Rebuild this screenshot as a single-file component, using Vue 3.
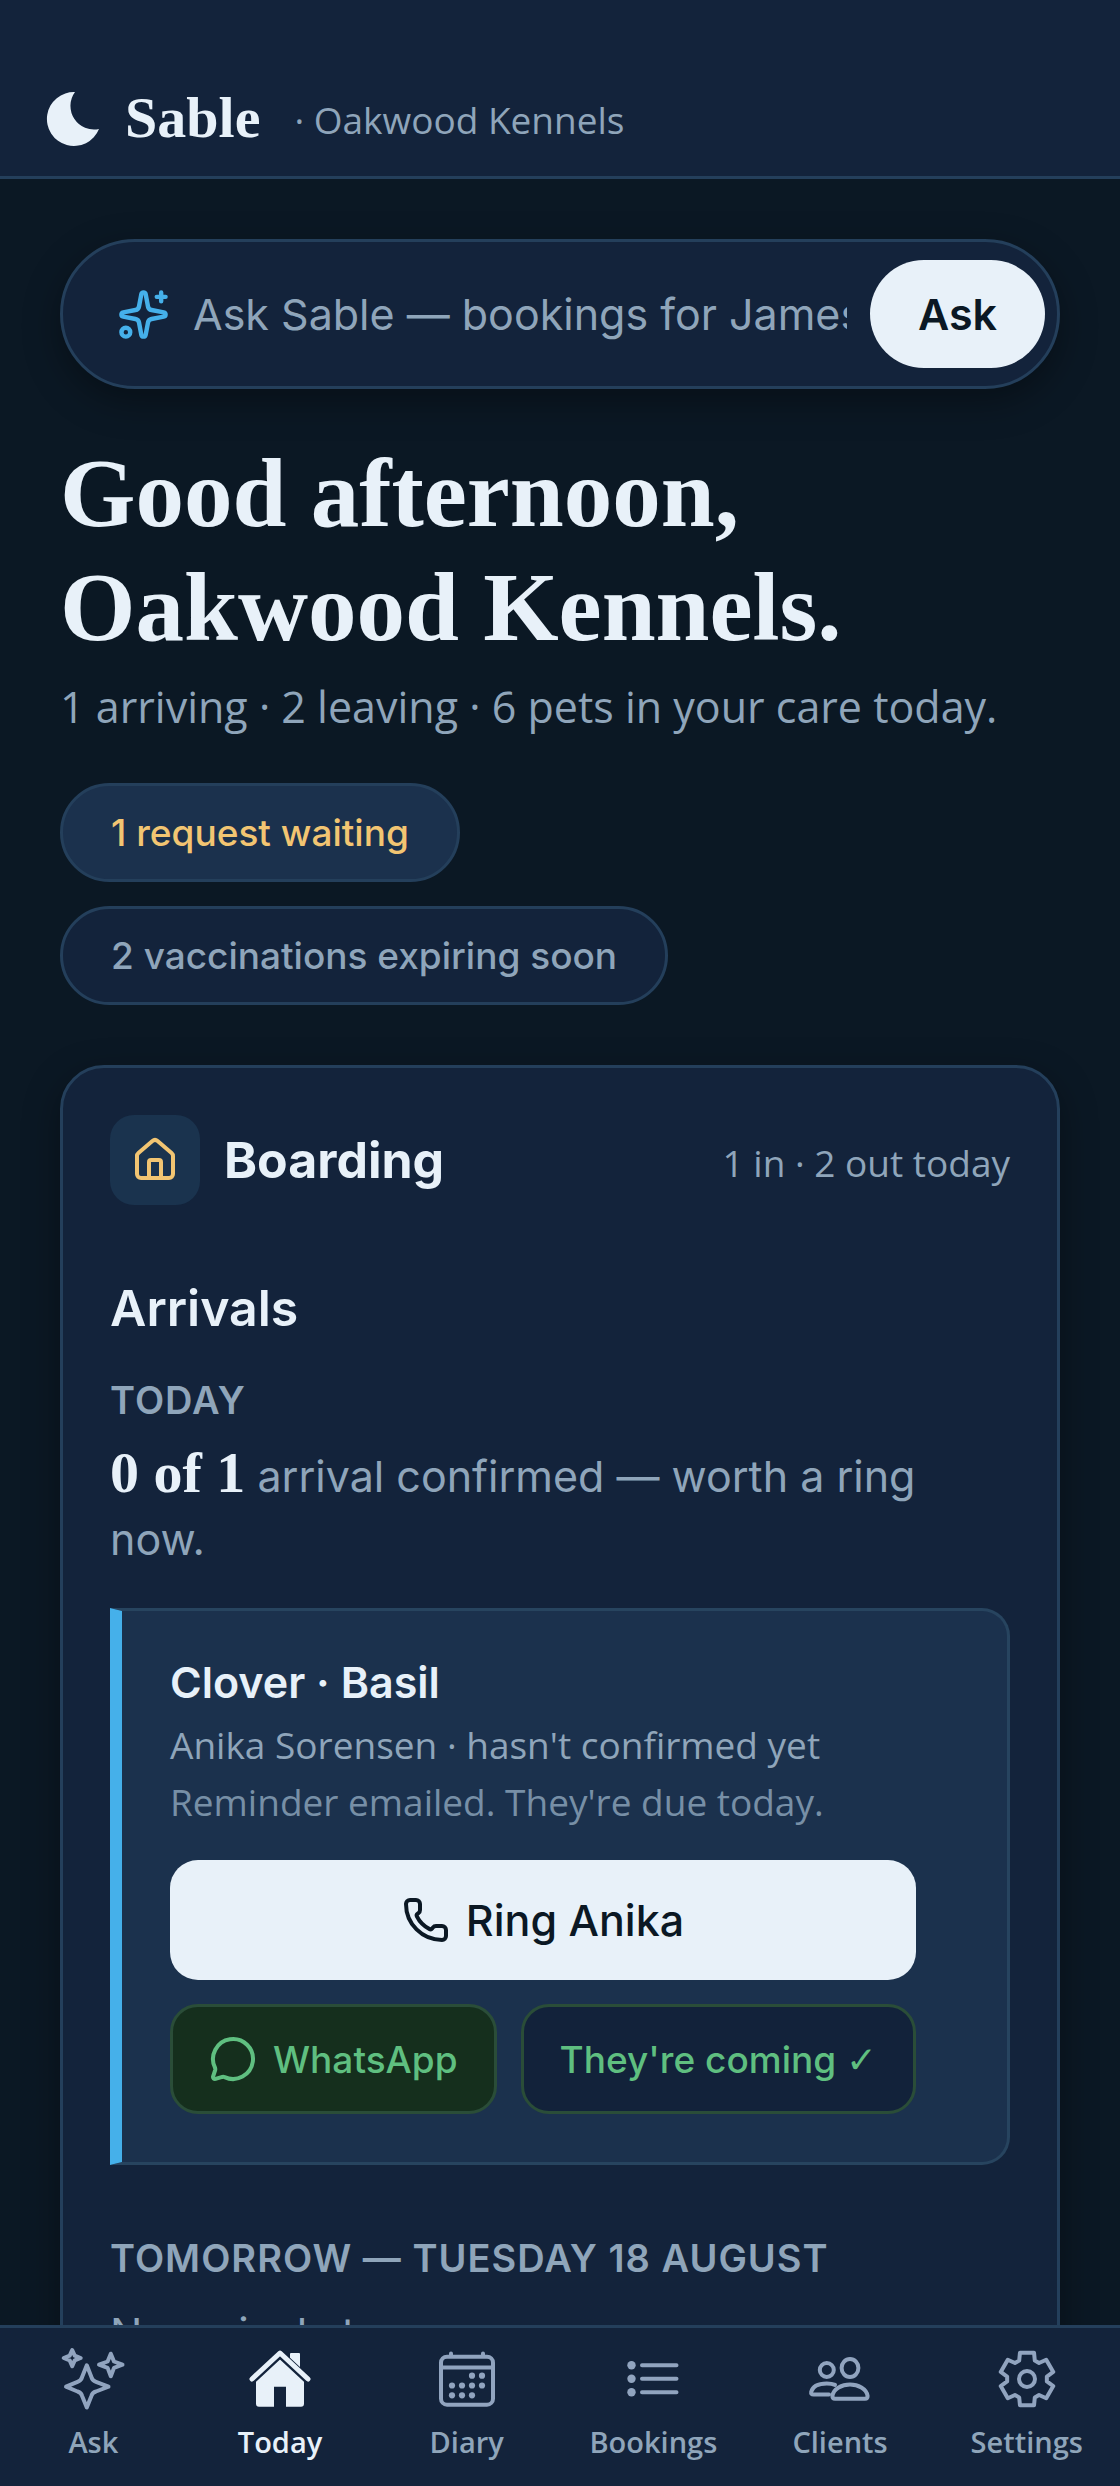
<script setup>
import { ref } from 'vue'

const query = ref('')

const tabs = [
  { id: 'ask', label: 'Ask' },
  { id: 'today', label: 'Today' },
  { id: 'diary', label: 'Diary' },
  { id: 'bookings', label: 'Bookings' },
  { id: 'clients', label: 'Clients' },
  { id: 'settings', label: 'Settings' }
]
const active = ref('today')

const diaryDots = [
  [38, 28.7], [48, 28.7],
  [18, 38.5], [28, 38.5], [38, 38.5], [48, 38.5],
  [18, 48.3], [28, 48.3], [38, 48.3]
]

// Six-toothed cog outline around (33, 32)
const toothCorners = [[-23, 20], [-15, 27.2], [15, 27.2], [23, 20]]
const gearPath = [0, 60, 120, 180, 240, 300]
  .flatMap((turn) =>
    toothCorners.map(([offset, radius]) => {
      const angle = ((turn + offset) * Math.PI) / 180
      return `${(33 + radius * Math.sin(angle)).toFixed(2)} ${(32 - radius * Math.cos(angle)).toFixed(2)}`
    })
  )
  .join('L')
</script>

<template>
  <div class="app">
    <header class="topbar">
      <svg class="moon" viewBox="0 0 54 57" aria-hidden="true">
        <path d="M29 2A27 27 0 1 0 53 39A23.6 23.6 0 0 1 29 2Z" />
      </svg>
      <span class="brand">Sable</span>
      <span class="site">· Oakwood Kennels</span>
    </header>

    <main class="content">
      <form class="search" @submit.prevent>
        <svg class="line-icon sparkle" viewBox="0 0 24 24" aria-hidden="true">
          <path d="M11.017 2.814a1 1 0 0 1 1.966 0l1.051 5.558a2 2 0 0 0 1.594 1.594l5.558 1.051a1 1 0 0 1 0 1.966l-5.558 1.051a2 2 0 0 0-1.594 1.594l-1.051 5.558a1 1 0 0 1-1.966 0l-1.051-5.558a2 2 0 0 0-1.594-1.594l-5.558-1.051a1 1 0 0 1 0-1.966l5.558-1.051a2 2 0 0 0 1.594-1.594z" />
          <path d="M20 2v4M22 4h-4" />
          <circle cx="4" cy="20" r="2" />
        </svg>
        <input v-model="query" type="text" aria-label="Ask Sable" placeholder="Ask Sable — bookings for James" />
        <button type="submit" class="ask">Ask</button>
      </form>

      <h1>Good afternoon, Oakwood Kennels.</h1>
      <p class="summary">1 arriving · 2 leaving · 6 pets in your care today.</p>

      <div class="chips">
        <button type="button" class="chip chip-alert">1 request waiting</button>
        <button type="button" class="chip">2 vaccinations expiring soon</button>
      </div>

      <section class="card">
        <div class="card-head">
          <span class="badge">
            <svg class="line-icon" viewBox="0 0 24 24" aria-hidden="true">
              <path d="M15 21v-8a1 1 0 0 0-1-1h-4a1 1 0 0 0-1 1v8" />
              <path d="M3 10a2 2 0 0 1 .709-1.528l7-6a2 2 0 0 1 2.582 0l7 6A2 2 0 0 1 21 10v9a2 2 0 0 1-2 2H5a2 2 0 0 1-2-2z" />
            </svg>
          </span>
          <h2>Boarding</h2>
          <span class="counts">1 in · 2 out today</span>
        </div>

        <h3>Arrivals</h3>
        <h4>TODAY</h4>
        <p class="status"><strong>0 of 1</strong> arrival confirmed — worth a ring now.</p>

        <article class="arrival">
          <h5>Clover · Basil</h5>
          <p class="detail">Anika Sorensen · hasn't confirmed yet</p>
          <p class="detail faint">Reminder emailed. They're due today.</p>
          <div class="actions">
            <button type="button" class="action ring">
              <svg class="line-icon" viewBox="0 0 24 24" aria-hidden="true">
                <path d="M13.832 16.568a1 1 0 0 0 1.213-.303l.355-.465A2 2 0 0 1 17 15h3a2 2 0 0 1 2 2v3a2 2 0 0 1-2 2A18 18 0 0 1 2 4a2 2 0 0 1 2-2h3a2 2 0 0 1 2 2v3a2 2 0 0 1-.8 1.6l-.468.351a1 1 0 0 0-.292 1.233 14 14 0 0 0 6.392 6.384" />
              </svg>
              Ring Anika
            </button>
            <button type="button" class="action whatsapp">
              <svg class="line-icon" viewBox="0 0 24 24" aria-hidden="true">
                <path d="M2.992 16.342a2 2 0 0 1 .094 1.167l-1.065 3.29a1 1 0 0 0 1.236 1.168l3.413-.998a2 2 0 0 1 1.099.092 10 10 0 1 0-4.777-4.719" />
              </svg>
              WhatsApp
            </button>
            <button type="button" class="action coming">
              <span>They're coming <span class="tick">✓</span></span>
            </button>
          </div>
        </article>

        <h4 class="next-day">TOMORROW — TUESDAY 18 AUGUST</h4>
        <p class="status">No arrivals tomorrow.</p>
      </section>
    </main>

    <nav class="tabs" aria-label="Main">
      <a
        v-for="tab in tabs"
        :key="tab.id"
        :href="'#' + tab.id"
        class="tab"
        :class="{ current: tab.id === active }"
        @click="active = tab.id"
      >
        <svg class="tab-icon" viewBox="0 0 66 66" aria-hidden="true">
          <g v-if="tab.id === 'ask'">
            <path d="M26.8 18.3L31.5 30.3Q32.5 33.5 36 34.8L48.5 39.7L36 44.5Q32.5 45.5 31.5 48.7L26.8 60.5L22 48.7Q21 45.5 17.5 44.5L6 39.7L17.5 34.8Q21 33.5 22 30.3Z" />
            <path d="M12.2 3L14.7 8.6L20.7 11L14.7 13.4L12.2 19.3L9.7 13.4L3.7 11L9.7 8.6Z" />
            <path d="M50.8 6.7L54 14.5L62.5 17.7L54 20.9L50.8 29.2L47.6 20.9L39 17.7L47.6 14.5Z" />
          </g>
          <g v-else-if="tab.id === 'today'">
            <path class="solid" d="M43 7Q43 6 44 6H52Q53 6 53 7V24L43 15Z" />
            <path class="solid" d="M33 11L57 33V56.5Q57 59.7 54 59.7H39V39.7H27V59.7H12Q9 59.7 9 56.5V33Z" />
            <path class="roof-gap" d="M5 33L33 7L61 33" />
            <path class="roof" d="M5 32L33 6L61 32" />
          </g>
          <g v-else-if="tab.id === 'diary'">
            <rect x="7" y="9.7" width="52" height="48" rx="6" />
            <path d="M7 20.5H59M17 6.5V9M49 6.5V9" />
            <circle v-for="([x, y], i) in diaryDots" :key="i" class="solid" :cx="x" :cy="y" r="3.1" />
          </g>
          <g v-else-if="tab.id === 'bookings'">
            <path d="M22 18.3H56.5M22 31.8H56.5M22 45.3H56.5" />
            <circle v-for="y in [18.3, 31.8, 45.3]" :key="y" class="solid" cx="11.5" :cy="y" r="4.2" />
          </g>
          <g v-else-if="tab.id === 'clients'">
            <circle cx="19.8" cy="23" r="7" />
            <ellipse cx="43" cy="21" rx="8.4" ry="8.9" />
            <path d="M25.4 49C26.5 41.7 35 37.6 43 37.6S59.5 41.7 60.6 49Q60.6 51.8 58 51.8H28Q25.4 51.8 25.4 49Z" />
            <path d="M22 47.5H6.5Q3.7 47.5 4.2 44.9C5.5 39 12 36.4 19.8 36.4Q25 36.4 28 37.9" />
          </g>
          <g v-else>
            <path :d="'M' + gearPath + 'Z'" />
            <circle cx="33" cy="32" r="8" />
          </g>
        </svg>
        <span>{{ tab.label }}</span>
      </a>
    </nav>
  </div>
</template>

<style>
body {
  margin: 0;
  background: #0b1824;
}
</style>

<style scoped>
.app {
  --surface: #13233b;
  --raised: #1b314d;
  --line: #243f5b;
  --text: #e8f1f9;
  --muted: #8fa5ba;
  --round: Inter, "Open Sans", sans-serif;
  --plain: "Open Sans", "Noto Sans", sans-serif;
  --serif: "Liberation Serif", serif;
  display: flex;
  flex-direction: column;
  height: 100vh;
  background: #0b1824;
  color: var(--text);
  font-family: var(--round);
}

h1, h2, h3, h4, h5, p {
  margin: 0;
}

button, input {
  box-sizing: border-box;
  font-family: inherit;
}

button {
  cursor: pointer;
}

.line-icon {
  flex: none;
  width: 48px;
  height: 48px;
  fill: none;
  stroke: currentColor;
  stroke-width: 2;
  stroke-linecap: round;
  stroke-linejoin: round;
}

.topbar {
  display: flex;
  flex: none;
  align-items: center;
  height: 116px;
  padding: 60px 46px 0;
  border-bottom: 3px solid var(--line);
  background: var(--surface);
}

.moon {
  width: 54px;
  height: 57px;
  fill: var(--text);
}

.brand {
  margin-left: 25px;
  font: 700 58px/72px var(--serif);
}

.site {
  margin-left: 34px;
  padding-top: 4px;
  color: var(--muted);
  font: 400 37px/52px var(--plain);
}

.content {
  flex: 1;
  min-height: 0;
  padding: 60px 60px 0;
  overflow-y: auto;
  scrollbar-width: none;
}

.search {
  display: flex;
  align-items: center;
  height: 144px;
  padding: 0 12px 0 54px;
  border: 3px solid var(--line);
  border-radius: 75px;
  background: var(--surface);
  box-shadow: 0 12px 36px rgba(0, 0, 0, 0.35);
}

.sparkle {
  width: 53px;
  height: 53px;
  color: #45b0ea;
}

.search input {
  flex: 1;
  min-width: 0;
  margin: 0 23px;
  padding: 0;
  border: 0;
  outline: 0;
  background: none;
  color: var(--text);
  font-size: 43px;
  line-height: 60px;
}

.search input::placeholder {
  color: var(--muted);
  opacity: 1;
}

.ask {
  height: 108px;
  padding: 0 48px;
  border: 0;
  border-radius: 54px;
  background: var(--text);
  color: #0b1824;
  font-size: 43px;
  font-weight: 600;
}

h1 {
  margin-top: 48px;
  font: 700 97px/114px var(--serif);
}

.summary {
  margin-top: 12px;
  color: var(--muted);
  font: 400 43px/60px var(--plain);
}

.chips {
  display: flex;
  flex-wrap: wrap;
  gap: 24px;
  margin-top: 46px;
}

.chip {
  height: 99px;
  padding: 0 48px;
  border: 3px solid var(--line);
  border-radius: 50px;
  background: var(--surface);
  color: var(--muted);
  font-size: 37px;
  font-weight: 500;
}

.chip-alert {
  background: var(--raised);
  color: #f2c572;
}

.card {
  margin-top: 60px;
  padding: 47px;
  border: 3px solid var(--line);
  border-radius: 44px;
  background: var(--surface);
  box-shadow: 0 12px 36px rgba(0, 0, 0, 0.35);
}

.card-head {
  display: flex;
  align-items: center;
}

.badge {
  display: flex;
  align-items: center;
  justify-content: center;
  width: 90px;
  height: 90px;
  border-radius: 24px;
  background: #1a334e;
  color: #f2c572;
}

h2 {
  margin-left: 24px;
  font-size: 50px;
  font-weight: 700;
  line-height: 62px;
}

.counts {
  margin-left: auto;
  padding-top: 6px;
  color: var(--muted);
  font: 400 37px/52px var(--plain);
}

h3 {
  margin-top: 72px;
  font-size: 50px;
  font-weight: 600;
  line-height: 62px;
}

h4 {
  margin-top: 37px;
  color: var(--muted);
  font-size: 38px;
  font-weight: 600;
  line-height: 48px;
  letter-spacing: 1px;
}

.status {
  margin-top: 20px;
  color: var(--muted);
  font-size: 43px;
  line-height: 63px;
}

.status strong {
  color: var(--text);
  font: 700 58px/58px var(--serif);
}

.arrival {
  margin-top: 37px;
  padding: 43px 48px 48px;
  border: 3px solid #27445f;
  border-left: 12px solid #45b0ea;
  border-radius: 0 28px 28px 0;
  background: var(--raised);
}

h5 {
  margin-bottom: 6px;
  font-size: 43px;
  font-weight: 600;
  line-height: 56px;
}

.detail {
  color: var(--muted);
  font: 400 37px/57px var(--plain);
}

.faint {
  color: #778fa6;
}

.actions {
  display: grid;
  grid-template-columns: auto auto;
  gap: 24px;
  width: max-content;
  margin-top: 30px;
}

.action {
  display: flex;
  align-items: center;
  justify-content: center;
  height: 110px;
  padding: 0 36px;
  border: 3px solid #2a4d38;
  border-radius: 28px;
  color: #5fbf80;
  font-size: 37px;
  font-weight: 500;
}

.ring {
  grid-column: 1 / -1;
  gap: 16px;
  height: 120px;
  border: 0;
  background: var(--text);
  color: #0b1824;
  font-size: 43px;
}

.whatsapp {
  gap: 16px;
  background: #152f1d;
}

.coming {
  background: #12223a;
}

.tick {
  font-family: "DejaVu Sans", sans-serif;
  font-weight: 400;
}

.next-day {
  margin-top: 69px;
}

.tabs {
  display: flex;
  flex: none;
  border-top: 3px solid var(--line);
  background: var(--surface);
}

.tab {
  display: flex;
  flex: 1 1 0;
  flex-direction: column;
  align-items: center;
  gap: 9px;
  min-width: 0;
  padding: 19px 0 24px;
  color: var(--muted);
  font: 600 29px/40px var(--plain);
  text-decoration: none;
}

.current {
  color: var(--text);
}

.tab-icon {
  width: 66px;
  height: 66px;
  fill: none;
  stroke: #91a4bf;
  stroke-width: 4;
  stroke-linecap: round;
  stroke-linejoin: round;
}

.solid {
  fill: #91a4bf;
  stroke: none;
}

.current .solid {
  fill: var(--text);
}

.roof {
  stroke: var(--text);
  stroke-width: 5;
}

.roof-gap {
  stroke: var(--surface);
  stroke-width: 8;
  stroke-linecap: butt;
}
</style>
